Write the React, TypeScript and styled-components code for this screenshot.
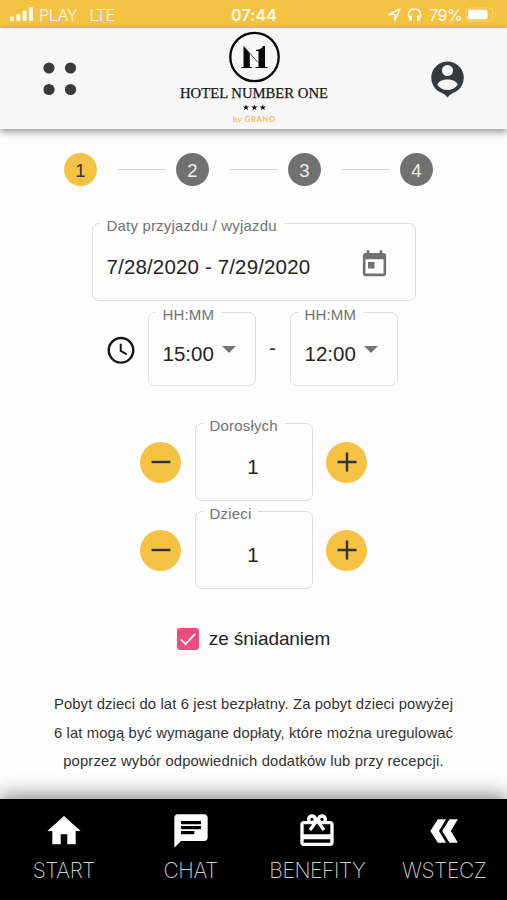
import React from "react";
import styled, { createGlobalStyle } from "styled-components";

const GlobalStyle = createGlobalStyle`
  *, *::before, *::after { box-sizing: border-box; }
  body { margin: 0; background: #fdfdfd; }
  button { font: inherit; padding: 0; border: 0; background: none; color: inherit; }
`;

const yellow = "#f6c244";
const ink = "#343a3e";

const Screen = styled.div`
  width: 507px;
  height: 900px;
  display: flex;
  flex-direction: column;
  overflow: hidden;
  background: #fdfdfd;
  color: #242424;
  font-family: "Liberation Sans", Arial, sans-serif;
`;

const StatusBar = styled.div`
  height: 28px;
  flex: none;
  display: grid;
  grid-template-columns: 1fr auto 1fr;
  align-items: center;
  padding: 2px 9px 0 10px;
  background: ${yellow};
  color: #fffaf0;
  font: 400 16px/26px Inter, sans-serif;
`;

const StatusGroup = styled.div<{ $end?: boolean }>`
  display: flex;
  align-items: center;
  justify-content: ${(p) => (p.$end ? "flex-end" : "flex-start")};
`;

const Carrier = styled.span`
  margin-left: 5px;
  font-weight: 300;
  letter-spacing: -0.2px;
`;

const Network = styled.span`
  margin-left: 12px;
  font-weight: 300;
  letter-spacing: -0.9px;
`;

const Clock = styled.span`
  font-weight: 600;
  letter-spacing: 0.1px;
`;

const Percent = styled.span`
  margin: 0 3px 0 6px;
  letter-spacing: -0.6px;
`;

const Header = styled.header`
  height: 101px;
  flex: none;
  display: flex;
  justify-content: space-between;
  align-items: center;
  padding: 0 43px;
  background: #f7f7f7;
  box-shadow: 0 3px 7px rgba(0, 0, 0, 0.42);
  position: relative;
`;

const LogoArt = styled.svg`
  margin-bottom: 3px;
`;

const Main = styled.main`
  flex: 1;
  min-height: 0;
  display: flex;
  flex-direction: column;
  align-items: center;
`;

const Steps = styled.div`
  display: flex;
  align-items: center;
  height: 33px;
  margin: 24px 10px 0 0;
`;

const StepDot = styled.span<{ $active?: boolean }>`
  width: 33px;
  height: 33px;
  border-radius: 50%;
  display: flex;
  align-items: center;
  justify-content: center;
  padding-top: 2px;
  font-size: 18.5px;
  background: ${(p) => (p.$active ? yellow : "#717171")};
  color: ${(p) => (p.$active ? "#333" : "#f0f0f0")};
`;

const StepLine = styled.span`
  width: 48px;
  height: 1px;
  margin: 0 10px 0 21px;
  background: #d6d6d6;
`;

const DateRow = styled.div`
  margin-top: 37px;
`;

const Field = styled.div<{ $w: number; $h: number }>`
  position: relative;
  width: ${(p) => p.$w}px;
  height: ${(p) => p.$h}px;
  flex: none;
  display: flex;
  align-items: center;
  padding: 10px 14px 0;
  border: 1px solid #dddddd;
  border-radius: 7px;
  font-size: 20.5px;
`;

const FieldLabel = styled.span`
  position: absolute;
  left: 7px;
  top: -9px;
  padding: 0 7px;
  background: #fdfdfd;
  color: #737373;
  font-size: 15px;
  line-height: 22px;
  letter-spacing: 0.18px;
  white-space: nowrap;
`;

const DateText = styled.span`
  flex: 1;
  letter-spacing: 0.15px;
`;

const CalendarButton = styled.button`
  margin: -4px 11px 0 0;
  height: 31px;
`;

const TimeRow = styled.div`
  display: flex;
  align-items: center;
  margin: 11px 5px 0 0;
`;

const ClockIcon = styled.svg`
  flex: none;
  margin-right: 11px;
`;

const Dash = styled.span`
  width: 34px;
  text-align: center;
  font-size: 20px;
`;

const Caret = styled.span`
  margin: -9px 0 0 8px;
  border: 7px solid transparent;
  border-top-color: #757575;
  border-bottom: 0;
`;

const CounterRow = styled.div<{ $top: number }>`
  display: flex;
  align-items: center;
  gap: 13.5px;
  margin-top: ${(p) => p.$top}px;
`;

const CountText = styled.span`
  flex: 1;
  text-align: center;
  padding-right: 1px;
`;

const RoundButton = styled.button`
  width: 41px;
  height: 41px;
  border-radius: 50%;
  background: ${yellow};
  display: flex;
  align-items: center;
  justify-content: center;
`;

const Breakfast = styled.label`
  display: flex;
  align-items: center;
  gap: 10px;
  height: 22px;
  margin-top: 39px;
  font-size: 19px;
  letter-spacing: -0.08px;
`;

const CheckBox = styled.span`
  width: 22px;
  height: 22px;
  border-radius: 3px;
  background: #ec4d7e;
  display: flex;
`;

const Info = styled.p`
  margin: 40px 0 0;
  text-align: center;
  font-size: 14.8px;
  line-height: 28.5px;
  letter-spacing: 0.13px;
  color: #333;
`;

const NavBar = styled.nav`
  position: relative;
  height: 101px;
  flex: none;
  display: grid;
  grid-template-columns: repeat(4, 1fr);
  background: #000;
  box-shadow: 0 -4px 18px rgba(0, 0, 0, 0.45);
`;

const NavItem = styled.button`
  display: flex;
  flex-direction: column;
  align-items: center;
  padding: 12px 0 0 1px;
  color: #fff;
`;

const NavLabel = styled.span`
  margin-top: 6px;
  font: 200 21px/28px Inter, sans-serif;
  color: #d0d0d0;
  letter-spacing: -0.4px;
`;

const Logo = () => (
  <LogoArt width="160" height="98" viewBox="0 0 160 98">
    <circle cx="80.5" cy="29" r="24.2" fill="none" stroke="#090909" strokeWidth="2.3" />
    <path d="M69.500 18l6.300 7.500V39H78v1H67.500v-1h2z" fill="#090909" />
    <path d="M70 18.500l14 16" stroke="#333" strokeWidth="0.800" />
    <path d="M82 22c4-.2 6-1.700 7-4h2v21h2.500v1h-12v-1h3V23H82z" fill="#090909" />
    <text x="6" y="69.500" fontFamily="Liberation Serif, serif" fontSize="14.300" textLength="148" lengthAdjust="spacingAndGlyphs" fill="#171717" stroke="#171717" strokeWidth="0.250">HOTEL NUMBER ONE</text>
    {[72, 80.4, 88.8].map((x) => (
      <path key={x} transform={`translate(${x} 79.500)`} d="M0-3l.8 2h2.300L1.300.4 2 2.700 0 1.300-2 2.700-1.300.4-3.100-1H-.8z" fill="#111" />
    ))}
    <text x="59" y="93.500" fontFamily="Lato, sans-serif" fontWeight="700" fontSize="7.500" textLength="42" fill="#efc060">by GRANO</text>
  </LogoArt>
);

const counters = [
  { label: "Dorosłych", top: 37.5 },
  { label: "Dzieci", top: 10 },
];

const navItems = [
  { label: "START", d: "M10 20v-6h4v6h5v-8h3L12 3 2 12h3v8z" },
  { label: "CHAT", d: "M20 2H4c-1.1 0-1.99.9-1.99 2L2 22l4-4h14c1.1 0 2-.9 2-2V4c0-1.1-.9-2-2-2zM6 6h12v2H6V6zm0 3h12v2H6V9zm8 5H6v-2h8v2z" },
  { label: "BENEFITY", d: "M20 6h-2.18c.11-.31.18-.65.18-1 0-1.66-1.34-3-3-3-1.05 0-1.96.54-2.5 1.35l-.5.67-.5-.68C10.96 2.54 10.05 2 9 2 7.34 2 6 3.34 6 5c0 .35.07.69.18 1H4c-1.11 0-1.99.89-1.99 2L2 19c0 1.11.89 2 2 2h16c1.11 0 2-.89 2-2V8c0-1.11-.89-2-2-2zm-5-2c.55 0 1 .45 1 1s-.45 1-1 1-1-.45-1-1 .45-1 1-1zM9 4c.55 0 1 .45 1 1s-.45 1-1 1-1-.45-1-1 .45-1 1-1zm11 15H4v-2h16v2zm0-5H4V8h5.08L7 10.83 8.62 12 11 8.76l1-1.36 1 1.36L15.38 12 17 10.83 14.92 8H20v6z" },
  { label: "WSTECZ", d: "M8.3 5h4.900l-4.200 7 4.200 7H8.300L3.800 12zM15.300 5h5l-4.200 7 4.200 7h-5l-4.400-7z" },
];

export default function App() {
  return (
    <Screen>
      <GlobalStyle />
      <StatusBar>
        <StatusGroup>
          <svg width="24" height="16" viewBox="0 0 24 16" fill="#fffaf0">
            <rect x="0" y="9.500" width="4" height="4.500" rx="1.200" />
            <rect x="6.300" y="7" width="4" height="7" rx="1.200" />
            <rect x="12.600" y="3.500" width="4" height="10.500" rx="1.200" />
            <rect x="18.900" y="0" width="4" height="14" rx="1.200" />
          </svg>
          <Carrier>PLAY</Carrier>
          <Network>LTE</Network>
        </StatusGroup>
        <Clock>07:44</Clock>
        <StatusGroup $end>
          <svg width="36" height="16" viewBox="0 0 36 16" fill="none" stroke="#fffaf0" strokeWidth="1.500">
            <path d="M2 7.500L13 2 8 13.200V7.600z" strokeLinejoin="round" />
            <path d="M22.800 12C19.500 5.500 23 2 27.500 2s8 3.500 4.700 10" />
            <path d="M23.800 8.500v5.500M31.200 8.500v5.500" strokeWidth="2.400" />
          </svg>
          <Percent>79%</Percent>
          <svg width="33" height="16" viewBox="0 0 33 16">
            <rect x="1" y="1" width="27" height="13" rx="4" fill="none" stroke="#f9d47c" />
            <rect x="3" y="2.800" width="19.500" height="9.500" rx="2" fill="#fff" />
            <path d="M30 5q3 2.500 0 5z" fill="#f9d47c" />
          </svg>
        </StatusGroup>
      </StatusBar>
      <Header>
        <svg width="34" height="34" viewBox="0 0 34 34" fill="#383a3c">
          <circle cx="6" cy="6" r="5.600" />
          <circle cx="27.500" cy="6" r="5.600" />
          <circle cx="6" cy="27.500" r="5.600" />
          <circle cx="27.500" cy="27.500" r="5.600" />
        </svg>
        <Logo />
        <svg width="34" height="38" viewBox="0 0 34 38">
          <path d="M17.500 1.500a16.300 16.300 0 0 1 5 31.800Q19.500 34.500 17.500 37.500q-2-3-5-4.200A16.300 16.300 0 0 1 17.500 1.500z" fill={ink} />
          <circle cx="17.500" cy="10.500" r="5.500" fill="#f7f7f7" />
          <path d="M7.300 24.700c2-7 18.400-7 20.400 0-5 7-15.400 7-20.400 0z" fill="#f7f7f7" />
        </svg>
      </Header>
      <Main>
        <Steps>
          {[1, 2, 3, 4].map((n) => (
            <React.Fragment key={n}>
              {n > 1 && <StepLine />}
              <StepDot $active={n === 1}>{n}</StepDot>
            </React.Fragment>
          ))}
        </Steps>
        <DateRow>
          <Field $w={324} $h={77.5}>
            <FieldLabel>Daty przyjazdu / wyjazdu</FieldLabel>
            <DateText>7/28/2020 - 7/29/2020</DateText>
            <CalendarButton aria-label="Kalendarz">
              <svg width="31" height="31" viewBox="0 0 24 24" fill="#707070">
                <path d="M19 3h-1V1h-2v2H8V1H6v2H5c-1.110 0-1.990.9-1.990 2L3 19c0 1.100.890 2 2 2h14c1.100 0 2-.9 2-2V5c0-1.100-.9-2-2-2zm0 16H5V8h14v11zM7 10h5v5H7z" />
              </svg>
            </CalendarButton>
          </Field>
        </DateRow>
        <TimeRow>
          <ClockIcon width="32" height="32" viewBox="0 0 24 24" fill="none" stroke="#161616">
            <circle cx="12" cy="13" r="9.200" strokeWidth="1.800" />
            <path d="M11.800 8v5.400l4.500 2.600" strokeWidth="1.500" />
          </ClockIcon>
          <Field $w={108} $h={74}>
            <FieldLabel>HH:MM</FieldLabel>
            15:00
            <Caret />
          </Field>
          <Dash>-</Dash>
          <Field $w={108} $h={74}>
            <FieldLabel>HH:MM</FieldLabel>
            12:00
            <Caret />
          </Field>
        </TimeRow>
        {counters.map((c) => (
          <CounterRow key={c.label} $top={c.top}>
            <RoundButton aria-label="Mniej">
              <svg width="20" height="20" stroke="#333" strokeWidth="2.400"><path d="M.5 10h19" /></svg>
            </RoundButton>
            <Field $w={118} $h={78}>
              <FieldLabel>{c.label}</FieldLabel>
              <CountText>1</CountText>
            </Field>
            <RoundButton aria-label="Więcej">
              <svg width="20" height="20" stroke="#333" strokeWidth="2.400"><path d="M.5 10h19M10 .5v19" /></svg>
            </RoundButton>
          </CounterRow>
        ))}
        <Breakfast>
          <CheckBox>
            <svg width="22" height="22" fill="none" stroke="#fff" strokeWidth="1.800"><path d="M4 11.500l4.500 4.700L18 6" /></svg>
          </CheckBox>
          ze śniadaniem
        </Breakfast>
        <Info>
          Pobyt dzieci do lat 6 jest bezpłatny. Za pobyt dzieci powyżej<br />
          6 lat mogą być wymagane dopłaty, które można uregulować<br />
          poprzez wybór odpowiednich dodatków lub przy recepcji.
        </Info>
      </Main>
      <NavBar>
        {navItems.map((item) => (
          <NavItem key={item.label}>
            <svg width="40" height="40" viewBox="0 0 24 24" fill="#fff"><path d={item.d} /></svg>
            <NavLabel>{item.label}</NavLabel>
          </NavItem>
        ))}
      </NavBar>
    </Screen>
  );
}
